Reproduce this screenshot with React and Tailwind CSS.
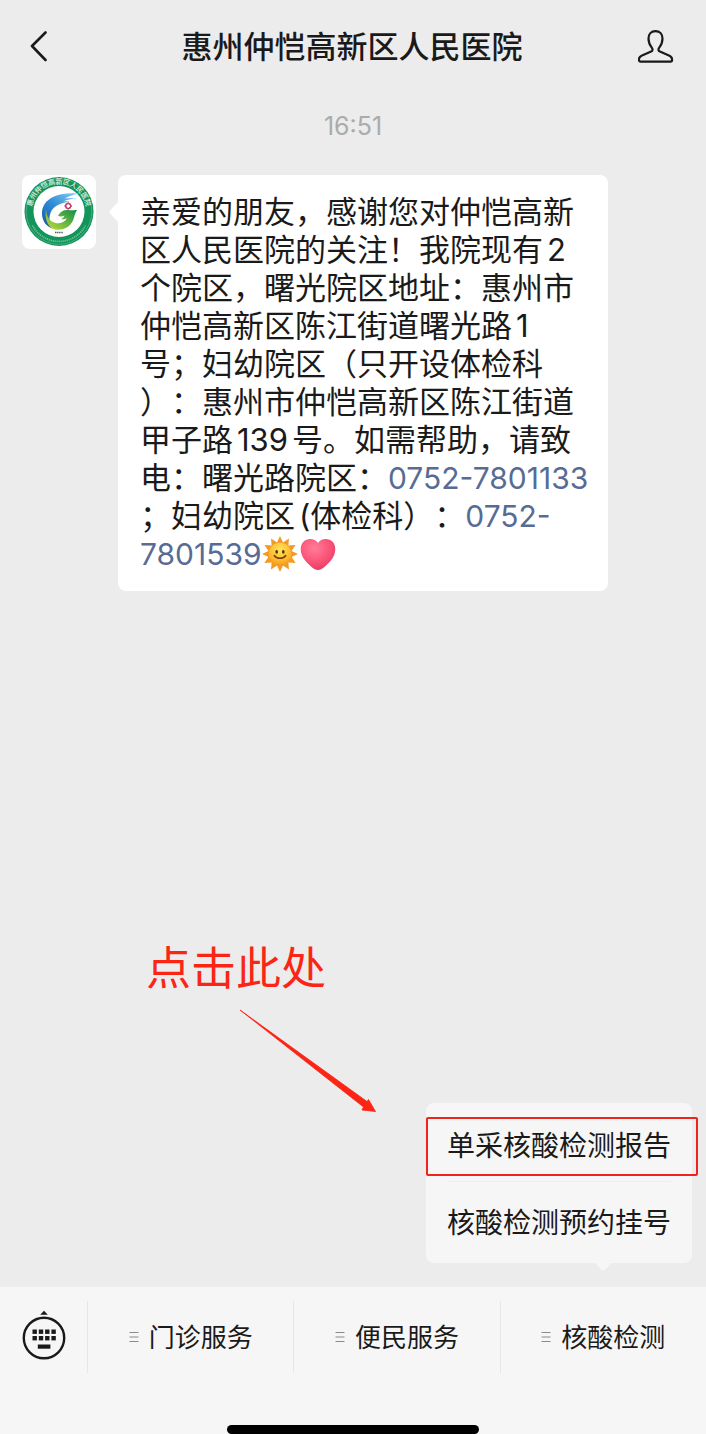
import React from "react";

const SANS = "font-['Inter','Noto_Sans_CJK_SC',sans-serif]";

function BackIcon() {
  return (
    <svg width="18" height="32" viewBox="0 0 18 32" fill="none" stroke="#1a1a1a" strokeWidth="2.6" strokeLinecap="round" strokeLinejoin="round" aria-hidden="true">
      <path d="M15.500 1.500 2 15l13.500 14" />
    </svg>
  );
}

function PersonIcon() {
  return (
    <svg width="36" height="34" viewBox="0 0 36 34" fill="none" stroke="#1a1a1a" strokeWidth="2.2" strokeLinejoin="round" aria-hidden="true">
      <path d="M17.500 1.200c-4.400 0-7 3-7 7.400 0 3.800 1.300 6.800 3.400 9.300 1 1.300.8 2.900-.8 3.600L3.500 25.700c-1.900.9-2.600 2.100-2.600 4 0 1.300.5 1.900 1.600 1.900h30c1.100 0 1.600-.6 1.600-1.900 0-1.900-.7-3.100-2.600-4l-9.600-4.200c-1.600-.7-1.800-2.300-.8-3.600 2.100-2.500 3.400-5.500 3.400-9.300 0-4.400-2.600-7.400-7-7.400Z" />
    </svg>
  );
}

function HospitalLogo() {
  return (
    <svg className="size-[74px]" viewBox="0 0 74 74" role="img" aria-label="惠州仲恺高新区人民医院">
      <defs>
        <linearGradient id="swoosh" x1="1" y1="0" x2="0" y2="1">
          <stop offset="0" stopColor="#8fd0f5" />
          <stop offset="0.5" stopColor="#2f8ed6" />
          <stop offset="1" stopColor="#1b4fa8" />
        </linearGradient>
        <linearGradient id="leaf" x1="0" y1="1" x2="1" y2="0">
          <stop offset="0" stopColor="#c9dc3c" />
          <stop offset="0.450" stopColor="#6dba3f" />
          <stop offset="1" stopColor="#0f8a4c" />
        </linearGradient>
        <path id="ring" d="M12.200 47.500A27.300 27.300 0 1 1 61.800 47.500" />
      </defs>
      <circle cx="37" cy="36.500" r="34.500" fill="#12945a" />
      <circle cx="37" cy="36.500" r="32.800" fill="none" stroke="#5cb88c" strokeWidth="0.700" />
      <path d="M10.500 50.500A30 30 0 0 0 63.500 50.500" fill="none" stroke="#6fc19c" strokeWidth="1.800" strokeDasharray="1.200 0.800" />
      <circle cx="37" cy="36.500" r="25.500" fill="#fff" />
      <text fill="#e3f4ea" fontSize="7" fontWeight="500" fontFamily="Noto Sans CJK SC, sans-serif">
        <textPath href="#ring" startOffset="50%" textAnchor="middle">惠州仲恺高新区人民医院</textPath>
      </text>
      <path d="M57 18.500C47 18 39 18.500 32 21.500c-8 3.500-12.500 10-12 18 .5 7 4.500 12 10.500 14-3-5-4-10-2-15.500C31 31 38 28 48 26.500c-2.500-.3-5-.2-7 0 4.500-2 9.500-3 14-3.200-4-.6-8-.5-12 .2 4.500-2.500 9-4 14-5Z" fill="url(#swoosh)" />
      <path d="M24 34c-1.500 8 .5 15 6 19.500 9 3.500 17.500-.5 21-8 1.500-3.500 1.500-7 4-10.500-4 .3-6 .5-9 0-3.500-.5-7 1-10 5.500 2 1.500 4.500 1 6.500 0-.5 2-2 3-3.500 3.500 2.500.6 4.500.2 6-.8-2.500 4-7 6-11.500 4.800-6-1.500-9-6.500-9.500-14Z" fill="url(#leaf)" />
      <g fill="none" stroke="#c4386a" strokeWidth="1.300">
        <path d="M43 31 46.200 27.800l3.200 3.200-3.200 3.200Z" />
        <path d="M43.900 28.700h4.600v4.600h-4.600Z" strokeWidth="0.800" />
      </g>
      <path d="M33 57.500h8" stroke="#4b6b5a" strokeWidth="1.600" strokeDasharray="1.300 0.500" />
    </svg>
  );
}

function SunEmoji() {
  return (
    <svg className="inline-block size-9 align-[-7px]" viewBox="0 0 36 36" role="img" aria-label="太阳">
      <defs>
        <radialGradient id="sunface" cx="0.500" cy="0.300" r="0.750">
          <stop offset="0" stopColor="#ffe558" />
          <stop offset="0.700" stopColor="#fdb52b" />
          <stop offset="1" stopColor="#f0921c" />
        </radialGradient>
      </defs>
      <path d="M18 0l3 6.500L27 2.400l-.6 7L33.600 9l-4 6L36 18l-6.400 3 4 6-7.200-.4.6 7-6-4.100L18 36l-3-6.500-6 4.100.6-7L2.400 27l4-6L0 18l6.400-3-4-6 7.200.4-.6-7 6 4.100Z" fill="#f29a26" />
      <circle cx="18" cy="18" r="11.300" fill="url(#sunface)" />
      <ellipse cx="14.700" cy="15.800" rx="1.300" ry="1.900" fill="#4c3012" />
      <ellipse cx="21.300" cy="15.800" rx="1.300" ry="1.900" fill="#4c3012" />
      <path d="M12.300 19.500c2.700 3.800 8.700 3.800 11.400 0" fill="none" stroke="#6b3d10" strokeWidth="1.500" strokeLinecap="round" />
    </svg>
  );
}

function HeartEmoji() {
  return (
    <svg className="ml-0.5 inline-block size-9 align-[-7px]" viewBox="0 0 36 36" role="img" aria-label="爱心">
      <defs>
        <radialGradient id="heartfill" cx="0.400" cy="0.300" r="0.750">
          <stop offset="0" stopColor="#ff7d9a" />
          <stop offset="0.600" stopColor="#fb5277" />
          <stop offset="1" stopColor="#e23a5e" />
        </radialGradient>
      </defs>
      <path d="M18 7C21 1.800 29 1.500 33 6.200c4 5.300 2.500 12.800-2.500 18.800C27 29 22 34 18 34S9 29 5.500 25C.5 19-1 11.500 3 6.200 7 1.500 15 1.800 18 7Z" fill="url(#heartfill)" />
    </svg>
  );
}

function KeyboardIcon() {
  const columns = [10.5, 16.8, 23.1, 29.4];
  return (
    <svg width="44" height="50" viewBox="0 0 44 50" aria-hidden="true">
      <path d="M22 0.800 25.800 4.800H18.200Z" fill="#1a1a1a" />
      <circle cx="22" cy="28" r="20.200" fill="none" stroke="#1a1a1a" strokeWidth="2.400" />
      <g fill="#1a1a1a">
        {columns.map((x) => (
          <React.Fragment key={x}>
            <rect x={x} y="19.500" width="4.400" height="4.400" />
            <rect x={x} y="26" width="4.400" height="4.400" />
          </React.Fragment>
        ))}
        <rect x="15.800" y="34.500" width="12.600" height="4.200" />
      </g>
    </svg>
  );
}

function ListIcon() {
  return (
    <svg width="10" height="12" viewBox="0 0 10 12" stroke="#8a8a8a" strokeWidth="1.200" aria-hidden="true">
      <path d="M0.500 1.500h9M0.500 6h9M0.500 10.500h9" />
    </svg>
  );
}

function Num({ children }) {
  return <span className="mx-1">{children}</span>;
}

function Phone({ href, children }) {
  return (
    <a href={href} className="text-[30px] text-[#576b95]">
      {children}
    </a>
  );
}

function Message() {
  return (
    <section className="flex items-start gap-[22px] pr-[98px] pl-[22px]">
      <div className="shrink-0 overflow-hidden rounded-lg bg-white">
        <HospitalLogo />
      </div>
      <div className="relative min-w-0 flex-1 rounded-lg bg-white px-[22px] py-[18px]">
        <svg className="absolute top-[26px] -left-[9px]" width="10" height="22" viewBox="0 0 10 22" aria-hidden="true">
          <path d="M10 0v22L1 12.500q-1-1.500 0-3Z" fill="#fff" />
        </svg>
        <p className="text-[31px] leading-[38px] whitespace-nowrap text-[#1a1a1a] [text-spacing-trim:space-all]">
          亲爱的朋友，感谢您对仲恺高新<br />
          区人民医院的关注！我院现有<Num>2</Num><br />
          个院区，曙光院区地址：惠州市<br />
          仲恺高新区陈江街道曙光路<Num>1</Num><br />
          号；妇幼院区（只开设体检科<br />
          ）：惠州市仲恺高新区陈江街道<br />
          甲子路<Num>139</Num>号。如需帮助，请致<br />
          电：曙光路院区：<Phone href="tel:0752-7801133">0752-7801133</Phone><br />
          ；妇幼院区<span className="ml-1">(</span>体检科）：<Phone href="tel:0752-7801539">0752-<br />7801539</Phone>
          <SunEmoji />
          <HeartEmoji />
        </p>
      </div>
    </section>
  );
}

function PopupMenu() {
  return (
    <div className="absolute right-3.5 bottom-6 w-[266px] rounded-lg bg-[#f6f6f6] px-[21px] pt-2 text-[28px] text-[#1a1a1a]">
      <div className="relative">
        <button type="button" className="block h-[70px] w-full whitespace-nowrap">单采核酸检测报告</button>
        <span className="pointer-events-none absolute top-1.5 -right-[27px] -left-[21px] h-[59px] rounded-xs border-2 border-[#f0241c]" />
      </div>
      <button type="button" className="block h-[82px] w-full border-t border-[#eeeeee] whitespace-nowrap">核酸检测预约挂号</button>
      <svg className="absolute right-20 -bottom-2" width="18" height="9" viewBox="0 0 18 9" aria-hidden="true">
        <path d="M0 0h18l-7.500 8q-1.500 1.500-3 0Z" fill="#f6f6f6" />
      </svg>
    </div>
  );
}

function Hint() {
  return (
    <div className="absolute right-[330px] bottom-[172px] w-[230px] text-[#fb2516]">
      <p className="text-[45px] leading-[56px] whitespace-nowrap">点击此处</p>
      <svg className="mt-3 ml-[93px]" width="138" height="106" viewBox="0 0 138 106" fill="currentColor" aria-hidden="true">
        <path d="M1 1 128 92.500 129.500 90.500 136.500 102.500 123 101 124.500 98Z" stroke="currentColor" strokeWidth="0.800" />
      </svg>
    </div>
  );
}

export default function App() {
  const tabs = ["门诊服务", "便民服务", "核酸检测"];
  return (
    <div className={`flex min-h-screen flex-col bg-[#ececec] ${SANS}`}>
      <header className="flex h-[94px] items-center justify-between pr-8 pl-[30px]">
        <button type="button" aria-label="返回" className="flex w-9 items-center">
          <BackIcon />
        </button>
        <h1 className="text-[31px] font-medium whitespace-nowrap text-[#1a1a1a]">惠州仲恺高新区人民医院</h1>
        <button type="button" aria-label="公众号资料">
          <PersonIcon />
        </button>
      </header>
      <main className="relative flex-1">
        <time className="block pt-4 pb-[33px] text-center text-[25px] leading-8 text-[#ababab]">16:51</time>
        <Message />
        <Hint />
        <PopupMenu />
      </main>
      <footer className="bg-[#f6f6f6]">
        <nav className="flex h-[100px] items-center">
          <button type="button" aria-label="切换键盘" className="flex w-[87px] shrink-0 justify-center pb-1">
            <KeyboardIcon />
          </button>
          {tabs.map((label) => (
            <button key={label} type="button" className="flex h-[72px] flex-1 items-center justify-center gap-2.5 border-l border-[#e6e6e6] text-[26px] whitespace-nowrap text-[#1a1a1a]">
              <ListIcon />
              {label}
            </button>
          ))}
        </nav>
        <div className="mx-auto mt-[38px] h-[9px] w-[252px] rounded-full bg-black" />
      </footer>
    </div>
  );
}
